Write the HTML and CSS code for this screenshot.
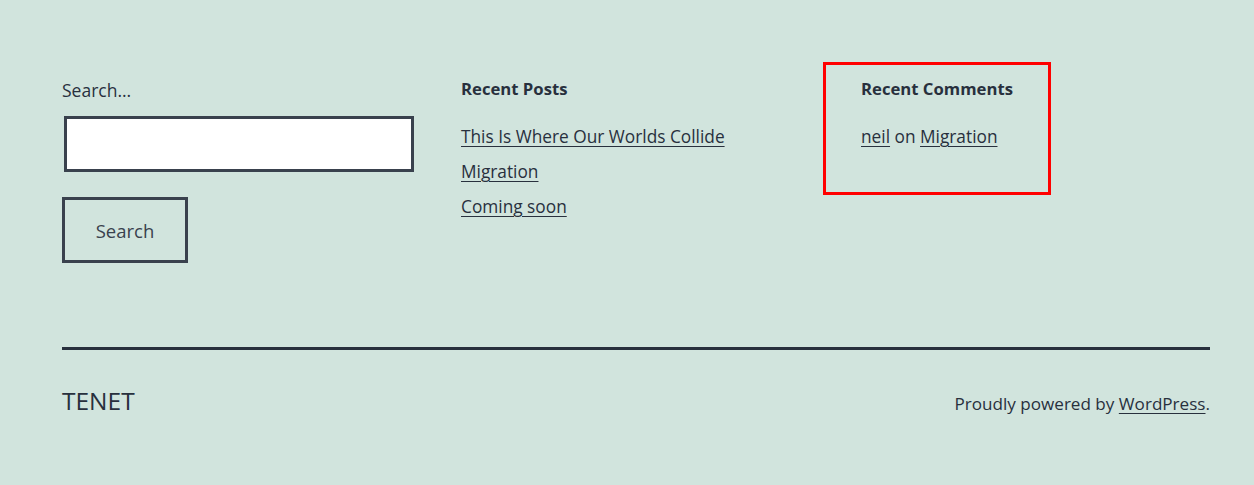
FILE: index.html
```html
<!DOCTYPE html>
<html lang="en">
<head>
<meta charset="utf-8">
<title>TENET</title>
<link rel="stylesheet" href="styles.css">
</head>
<body>
<footer class="site-footer">
  <div class="widgets">
    <section class="widget widget-search">
      <label class="search-label" for="s">Search…</label>
      <input class="search-input" id="s" type="search">
      <button class="search-button" type="button">Search</button>
    </section>
    <section class="widget">
      <h2 class="widget-title">Recent Posts</h2>
      <ul class="post-list">
        <li><a href="#">This Is Where Our Worlds Collide</a></li>
        <li><a href="#">Migration</a></li>
        <li><a href="#">Coming soon</a></li>
      </ul>
    </section>
    <section class="widget widget-comments">
      <div class="highlight"></div>
      <h2 class="widget-title">Recent Comments</h2>
      <ul class="post-list">
        <li><a href="#">neil</a> on <a href="#">Migration</a></li>
      </ul>
    </section>
  </div>
  <div class="site-info">
    <div class="site-name">TENET</div>
    <div class="powered">Proudly powered by <a href="#">WordPress</a>.</div>
  </div>
</footer>
</body>
</html>
```
FILE: styles.css
```css
html, body {
  margin: 0;
  padding: 0;
}
body {
  background: #d1e4dd;
  color: #28303d;
  font-family: "Open Sans", "Noto Sans", sans-serif;
  font-size: 17.3px;
  line-height: 1.5;
}
a {
  color: #28303d;
  text-decoration: underline;
  text-decoration-thickness: 1px;
  text-underline-offset: 3px;
}
.site-footer {
  padding: 76px 44px 0 62px;
}
.widgets {
  display: grid;
  grid-template-columns: 349px 350px 349px;
  column-gap: 50px;
  height: 271px;
}
.widget {
  position: relative;
}
.search-label {
  display: block;
  line-height: 28px;
  font-size: 17.5px;
}
.search-input {
  display: block;
  box-sizing: border-box;
  margin: 12px 0 0 2px;
  width: 350px;
  height: 56px;
  border: 3px solid #39414d;
  background: #fff;
  padding: 0;
}
.search-button {
  display: block;
  box-sizing: border-box;
  margin-top: 25px;
  width: 126px;
  height: 66px;
  border: 3px solid #39414d;
  background: transparent;
  color: #39414d;
  font-family: inherit;
  font-size: 18.5px;
  padding: 0;
}
.widget-title {
  margin: 0;
  font-size: 16.7px;
  font-weight: 700;
  line-height: 26px;
}
.post-list {
  list-style: none;
  margin: 17px 0 0;
  padding: 0;
}
.post-list li {
  line-height: 35px;
}
.highlight {
  position: absolute;
  left: -38px;
  top: -14px;
  width: 228px;
  height: 133px;
  box-sizing: border-box;
  border: 3px solid #ff0000;
}
.site-info {
  border-top: 3px solid #28303d;
  display: flex;
  justify-content: space-between;
  align-items: baseline;
  padding-top: 33px;
}
.site-name {
  font-size: 24.5px;
  font-weight: 400;
}
.powered {
  font-size: 17.1px;
}
```
